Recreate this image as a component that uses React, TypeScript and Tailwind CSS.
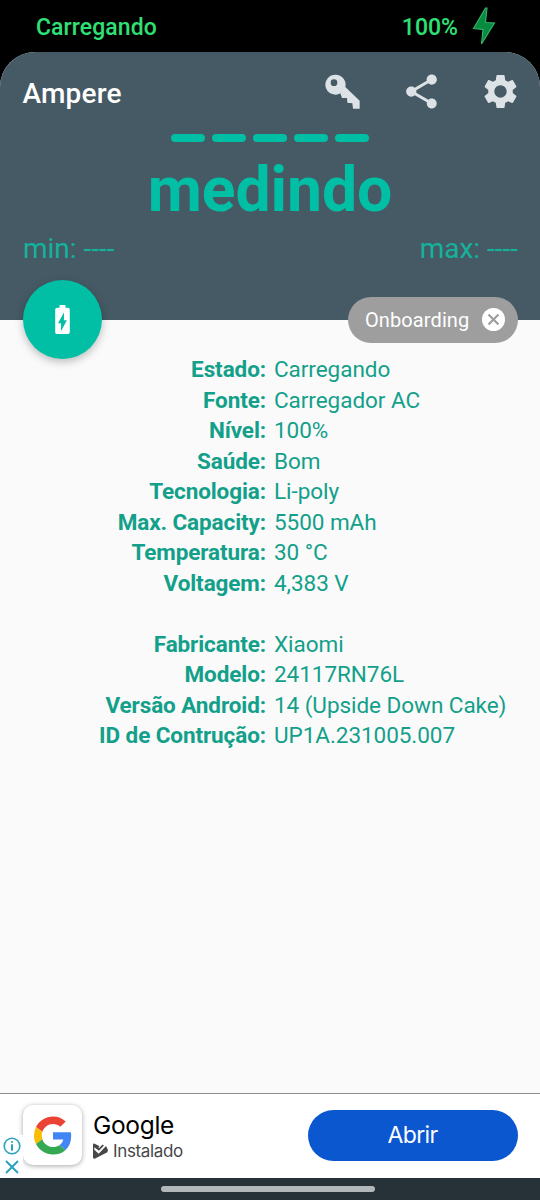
import { MdBatteryChargingFull, MdSettings, MdShare } from "react-icons/md";

const battery = [
  ["Estado:", "Carregando"],
  ["Fonte:", "Carregador AC"],
  ["Nível:", "100%"],
  ["Saúde:", "Bom"],
  ["Tecnologia:", "Li-poly"],
  ["Max. Capacity:", "5500 mAh"],
  ["Temperatura:", "30 °C"],
  ["Voltagem:", "4,383 V"],
];

const device = [
  ["Fabricante:", "Xiaomi"],
  ["Modelo:", "24117RN76L"],
  ["Versão Android:", "14 (Upside Down Cake)"],
  ["ID de Contrução:", "UP1A.231005.007"],
];

function InfoTable({ rows }: { rows: string[][] }) {
  return (
    <dl>
      {rows.map(([label, value]) => (
        <div key={label} className="flex h-[30.5px] items-center whitespace-nowrap text-[22.5px] leading-none text-[#12a08a]">
          <dt className="w-[266px] shrink-0 text-right font-bold tracking-[-0.1px]">{label}</dt>
          <dd className="pl-2 tracking-[-0.05px]">{value}</dd>
        </div>
      ))}
    </dl>
  );
}

function StatusBar() {
  return (
    <div className="flex h-[52px] shrink-0 items-center pl-9 pr-11 text-[23px] font-medium leading-none text-[#2ee076]">
      <span className="pt-[2px] tracking-[0.08px]">Carregando</span>
      <span className="ml-auto pt-[2px]">100%</span>
      <svg className="ml-[14px]" width="24" height="38" viewBox="0 0 24 38">
        <path d="M13.5 1 1.5 21.5 11 22.5 9.5 37 22.5 16 13.5 15.5 15 1Z" fill="#078b40" stroke="#36b66c" strokeWidth="1.1" />
      </svg>
    </div>
  );
}

function KeyIcon() {
  return (
    <svg width="35" height="35" viewBox="0 0 105 105" fill="#dce2e6">
      <path
        fillRule="evenodd"
        d="M32 2a30 30 0 1 0 14 56L51 72 66 72 67 86 82 88 84 104H104V80L61 39A30 30 0 0 0 32 2ZM27 16a10 10 0 1 1 0 20 10 10 0 0 1 0-20Z"
      />
    </svg>
  );
}

function GoogleLogo() {
  return (
    <svg width="38" height="39" viewBox="0 0 48 48">
      <path fill="#EA4335" d="M24 9.5c3.54 0 6.71 1.22 9.21 3.6l6.85-6.85C35.9 2.38 30.47 0 24 0 14.62 0 6.51 5.38 2.56 13.22l7.98 6.19C12.43 13.72 17.74 9.5 24 9.5z" />
      <path fill="#4285F4" d="M46.98 24.55c0-1.57-.15-3.09-.38-4.55H24v9.02h12.94c-.58 2.96-2.26 5.48-4.78 7.18l7.73 6c4.51-4.18 7.09-10.36 7.09-17.65z" />
      <path fill="#FBBC05" d="M10.53 28.59A14.5 14.5 0 0 1 9.77 24c0-1.6.27-3.14.76-4.59l-7.98-6.19A24 24 0 0 0 0 24c0 3.88.92 7.54 2.56 10.78l7.97-6.19z" />
      <path fill="#34A853" d="M24 48c6.48 0 11.93-2.13 15.89-5.81l-7.73-6c-2.15 1.45-4.92 2.3-8.16 2.3-6.26 0-11.57-4.22-13.47-9.91l-7.98 6.19C6.51 42.62 14.62 48 24 48z" />
    </svg>
  );
}

function AdBanner() {
  return (
    <div className="relative flex h-[85px] shrink-0 items-center border-t border-[#8d8d8d] bg-white pb-[1px] pl-[23px] pr-[22.5px]">
      <div className="flex h-[60px] w-[59px] shrink-0 items-center justify-center rounded-[10px] bg-white shadow-[0_1px_5px_rgba(0,0,0,0.35)]">
        <GoogleLogo />
      </div>
      <div className="ml-[11px] pt-[1px] font-[Inter]">
        <div className="text-[24.5px] leading-[30px] tracking-[-0.3px] text-black">Google</div>
        <div className="flex items-center gap-[5px] text-[17px] leading-[22px] tracking-[-0.35px] text-[#454749]">
          <svg width="15" height="16" viewBox="0 0 45 48">
            <path d="M0 5Q0 0 5 2L20 10 10 18 4 13V20L17 32 39 9 45 21 43 28 5 47Q0 48 0 43Z" fill="#454749" />
            <path d="M11 13 19 20 31 7" fill="none" stroke="#454749" strokeWidth="7" />
            <path d="M6 17 17 27 36 7" fill="none" stroke="#fff" strokeWidth="3.5" />
          </svg>
          <span>Instalado</span>
        </div>
      </div>
      <button className="ml-auto h-[51px] w-[210px] rounded-full bg-[#0b57d0] font-[Inter] text-[23px] tracking-[-0.6px] text-white">
        Abrir
      </button>
      <div className="absolute bottom-[3px] left-0 flex w-[23px] flex-col items-center gap-[5px] bg-white pb-[1px] pt-[2px]">
        <svg width="18" height="18" viewBox="0 0 18 18" fill="none" stroke="#2ca3be" strokeWidth="1.6">
          <circle cx="9" cy="9" r="7.8" />
          <path d="M9 7.2V13.8" strokeWidth="2" />
          <circle cx="9" cy="4.9" r="0.7" fill="#2ca3be" strokeWidth="0.8" />
        </svg>
        <svg width="14" height="14" viewBox="0 0 14 14" stroke="#2ca3be" strokeWidth="2">
          <path d="M1 1 13 13M13 1 1 13" />
        </svg>
      </div>
    </div>
  );
}

export default function App() {
  return (
    <div className="flex h-[1200px] w-[540px] flex-col overflow-hidden bg-black font-[Roboto,sans-serif]">
      <StatusBar />
      <div className="flex min-h-0 flex-1 flex-col overflow-hidden rounded-t-[35px] bg-[#fafafa]">
        <header className="relative flex h-[267.5px] shrink-0 flex-col bg-[#455a64]">
          <div className="flex h-[78px] items-center pl-[22.5px] pr-[19px]">
            <h1 className="pt-[6px] text-[28px] font-medium leading-none tracking-[0.2px] text-white">Ampere</h1>
            <div className="ml-auto flex items-center text-[#dce2e6]">
              <KeyIcon />
              <MdShare className="ml-[41px]" size={41} />
              <MdSettings className="ml-[38px]" size={41} />
            </div>
          </div>
          <div className="mt-[4px] flex justify-center gap-[6.5px]">
            {[0, 1, 2, 3, 4].map((i) => (
              <div key={i} className="h-[8px] w-[34.5px] rounded-full bg-[#00bfa5]" />
            ))}
          </div>
          <div className="mt-[16px] text-center text-[62.5px] font-bold leading-[64px] tracking-[-0.1px] text-[#00bfa5]">medindo</div>
          <div className="mt-[11px] flex justify-between pl-[23px] pr-[22px] text-[28px] leading-[32px] text-[#14b29c]">
            <span>min: ----</span>
            <span>max: ----</span>
          </div>
          <button className="absolute -bottom-[39.5px] left-[22.5px] flex size-[79px] items-center justify-center rounded-full bg-[#00bfa5] text-white shadow-[0_3px_9px_rgba(0,0,0,0.25)]">
            <MdBatteryChargingFull size={35} />
          </button>
          <div className="absolute -bottom-[23px] right-[22.5px] flex h-[46px] w-[169.5px] items-center rounded-full bg-[#9e9e9e] pl-[17px] pr-[13px] text-[20px] leading-none tracking-[0.1px] text-white">
            Onboarding
            <svg className="ml-auto" width="23" height="23" viewBox="0 0 23 23">
              <circle cx="11.5" cy="11.5" r="11.5" fill="#fff" />
              <path d="M6.5 6.5 16.5 16.5M16.5 6.5 6.5 16.5" stroke="#9e9e9e" strokeWidth="2.2" />
            </svg>
          </div>
        </header>
        <main className="flex-1 pt-[34.5px]">
          <InfoTable rows={battery} />
          <div className="h-[30.5px]" />
          <InfoTable rows={device} />
        </main>
        <AdBanner />
        <div className="flex h-[22.5px] shrink-0 justify-center bg-[#263238] pr-[4px] pt-[8.5px]">
          <div className="h-[6px] w-[214px] rounded-full bg-[#b2b7ba]" />
        </div>
      </div>
    </div>
  );
}
